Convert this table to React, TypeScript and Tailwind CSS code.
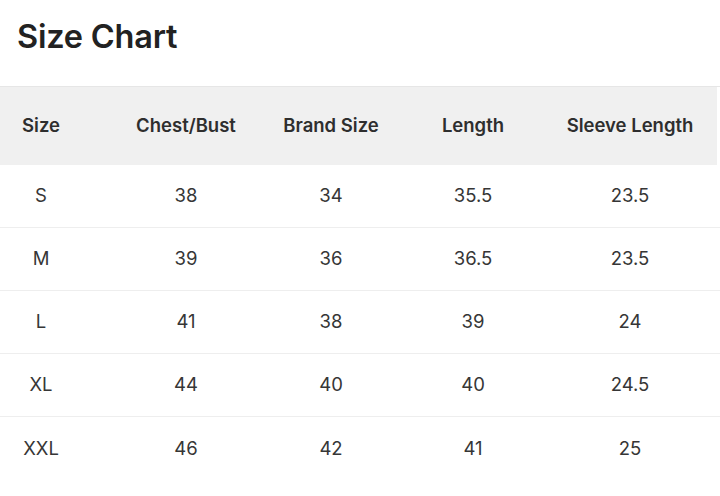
const columns = ["Size", "Chest/Bust", "Brand Size", "Length", "Sleeve Length"];

const rows = [
  ["S", "38", "34", "35.5", "23.5"],
  ["M", "39", "36", "36.5", "23.5"],
  ["L", "41", "38", "39", "24"],
  ["XL", "44", "40", "40", "24.5"],
  ["XXL", "46", "42", "41", "25"],
];

// each column is centred on its own x; widths picked so the centres line up
const colWidths = ["w-[82px]", "w-[208px]", "w-[82px]", "w-[202px]", "w-[112px]"];

export default function App() {
  return (
    <div className="w-[720px] h-[496px] overflow-hidden bg-white font-['Inter','Liberation_Sans',sans-serif] text-[#333]">
      <h1 className="pl-[17px] pt-[16px] h-[86px] text-[32.5px] leading-[42px] font-semibold text-[#222] tracking-[-0.2px]">
        Size Chart
      </h1>

      <div className="w-full border-t border-[#e6e6e6]">
        <div className="flex h-[78px] items-center bg-[#f0f0f0] w-[717px]">
          {columns.map((c, i) => (
            <div key={c} className={`${colWidths[i]} flex justify-center whitespace-nowrap text-[18.5px] font-semibold text-[#2e2e2e]`}>
              {c}
            </div>
          ))}
        </div>

        {rows.map((r, ri) => (
          <div
            key={r[0]}
            className={`flex h-[63px] items-center ${ri < rows.length - 1 ? "border-b border-[#eeeeee]" : ""}`}
          >
            {r.map((v, i) => (
              <div key={i} className={`${colWidths[i]} flex justify-center whitespace-nowrap text-[18.5px] text-[#363636]`}>
                {v}
              </div>
            ))}
          </div>
        ))}
      </div>
    </div>
  );
}
